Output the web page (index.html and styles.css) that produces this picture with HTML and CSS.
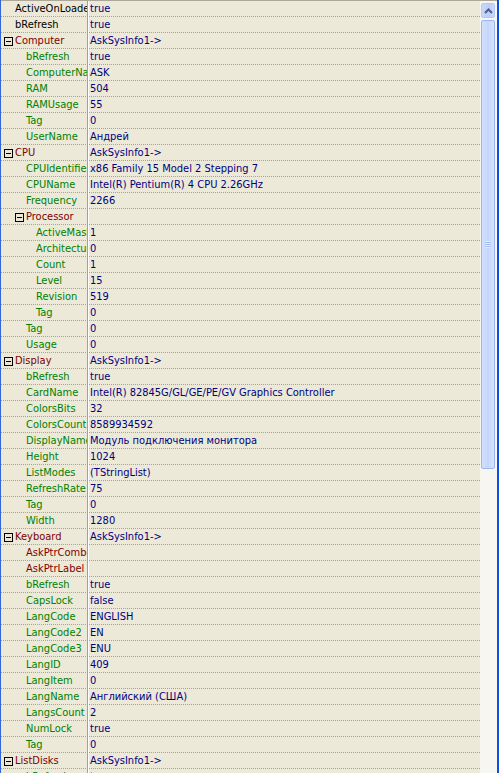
FILE: index.html
```html
<!DOCTYPE html>
<html>
<head>
<meta charset="utf-8">
<link rel="stylesheet" href="styles.css">
</head>
<body>
<div class="frame">
  <div class="grid">
    <div class="row"><div class="name l0">ActiveOnLoaded</div><div class="val">true</div></div>
    <div class="row"><div class="name l0">bRefresh</div><div class="val">true</div></div>
    <div class="row"><div class="name l0 exp cat"><span class="box"></span>Computer</div><div class="val">AskSysInfo1-&gt;</div></div>
    <div class="row"><div class="name l1 sub">bRefresh</div><div class="val">true</div></div>
    <div class="row"><div class="name l1 sub">ComputerName</div><div class="val">ASK</div></div>
    <div class="row"><div class="name l1 sub">RAM</div><div class="val">504</div></div>
    <div class="row"><div class="name l1 sub">RAMUsage</div><div class="val">55</div></div>
    <div class="row"><div class="name l1 sub">Tag</div><div class="val">0</div></div>
    <div class="row"><div class="name l1 sub">UserName</div><div class="val">Андрей</div></div>
    <div class="row"><div class="name l0 exp cat"><span class="box"></span>CPU</div><div class="val">AskSysInfo1-&gt;</div></div>
    <div class="row"><div class="name l1 sub">CPUIdentifier</div><div class="val">x86 Family 15 Model 2 Stepping 7</div></div>
    <div class="row"><div class="name l1 sub">CPUName</div><div class="val">Intel(R) Pentium(R) 4 CPU 2.26GHz</div></div>
    <div class="row"><div class="name l1 sub">Frequency</div><div class="val">2266</div></div>
    <div class="row"><div class="name l1 exp cat"><span class="box"></span>Processor</div><div class="val"></div></div>
    <div class="row"><div class="name l2 sub">ActiveMask</div><div class="val">1</div></div>
    <div class="row"><div class="name l2 sub">Architecture</div><div class="val">0</div></div>
    <div class="row"><div class="name l2 sub">Count</div><div class="val">1</div></div>
    <div class="row"><div class="name l2 sub">Level</div><div class="val">15</div></div>
    <div class="row"><div class="name l2 sub">Revision</div><div class="val">519</div></div>
    <div class="row"><div class="name l2 sub">Tag</div><div class="val">0</div></div>
    <div class="row"><div class="name l1 sub">Tag</div><div class="val">0</div></div>
    <div class="row"><div class="name l1 sub">Usage</div><div class="val">0</div></div>
    <div class="row"><div class="name l0 exp cat"><span class="box"></span>Display</div><div class="val">AskSysInfo1-&gt;</div></div>
    <div class="row"><div class="name l1 sub">bRefresh</div><div class="val">true</div></div>
    <div class="row"><div class="name l1 sub">CardName</div><div class="val">Intel(R) 82845G/GL/GE/PE/GV Graphics Controller</div></div>
    <div class="row"><div class="name l1 sub">ColorsBits</div><div class="val">32</div></div>
    <div class="row"><div class="name l1 sub">ColorsCount</div><div class="val">8589934592</div></div>
    <div class="row"><div class="name l1 sub">DisplayName</div><div class="val">Модуль подключения монитора</div></div>
    <div class="row"><div class="name l1 sub">Height</div><div class="val">1024</div></div>
    <div class="row"><div class="name l1 sub">ListModes</div><div class="val">(TStringList)</div></div>
    <div class="row"><div class="name l1 sub">RefreshRate</div><div class="val">75</div></div>
    <div class="row"><div class="name l1 sub">Tag</div><div class="val">0</div></div>
    <div class="row"><div class="name l1 sub">Width</div><div class="val">1280</div></div>
    <div class="row"><div class="name l0 exp cat"><span class="box"></span>Keyboard</div><div class="val">AskSysInfo1-&gt;</div></div>
    <div class="row"><div class="name l1 cat">AskPtrCombo</div><div class="val"></div></div>
    <div class="row"><div class="name l1 cat">AskPtrLabel</div><div class="val"></div></div>
    <div class="row"><div class="name l1 sub">bRefresh</div><div class="val">true</div></div>
    <div class="row"><div class="name l1 sub">CapsLock</div><div class="val">false</div></div>
    <div class="row"><div class="name l1 sub">LangCode</div><div class="val">ENGLISH</div></div>
    <div class="row"><div class="name l1 sub">LangCode2</div><div class="val">EN</div></div>
    <div class="row"><div class="name l1 sub">LangCode3</div><div class="val">ENU</div></div>
    <div class="row"><div class="name l1 sub">LangID</div><div class="val">409</div></div>
    <div class="row"><div class="name l1 sub">LangItem</div><div class="val">0</div></div>
    <div class="row"><div class="name l1 sub">LangName</div><div class="val">Английский (США)</div></div>
    <div class="row"><div class="name l1 sub">LangsCount</div><div class="val">2</div></div>
    <div class="row"><div class="name l1 sub">NumLock</div><div class="val">true</div></div>
    <div class="row"><div class="name l1 sub">Tag</div><div class="val">0</div></div>
    <div class="row"><div class="name l0 exp cat"><span class="box"></span>ListDisks</div><div class="val">AskSysInfo1-&gt;</div></div>
    <div class="row"><div class="name l1 sub">bRefresh</div><div class="val">true</div></div>
  </div>
  <div class="scroll">
    <div class="btn">
      <svg width="9" height="6" viewBox="0 0 9 6"><polyline points="1,5 4.5,1.5 8,5" fill="none" stroke="#4D6185" stroke-width="2"/></svg>
    </div>
    <div class="thumb"><div class="grip"></div></div>
    <div class="track"></div>
  </div>
</div>
</body>
</html>
```
FILE: styles.css
```css
html, body {
  margin: 0;
  padding: 0;
  background: #ECE9D8;
}
body {
  font-family: "DejaVu Sans Condensed", "DejaVu Sans", sans-serif;
  font-size: 11px;
}
.frame {
  display: flex;
  height: 773px;
  overflow: hidden;
  border-left: 1px solid #3165D8;
  border-right: 2px solid #0B50E0;
}
.grid {
  flex: 1;
  border-top: 1px solid #ACA899;
  min-width: 0;
}
.row {
  display: flex;
  height: 16px;
  line-height: 15px;
  background: linear-gradient(to right, #A6A399 50%, transparent 50%) left bottom / 2px 1px repeat-x;
}
.name {
  width: 87px;
  flex: none;
  box-sizing: border-box;
  border-right: 1px solid #A0A0A0;
  overflow: hidden;
  white-space: nowrap;
  display: flex;
  align-items: flex-start;
  color: #000;
  height: 16px;
}
.l0 { padding-left: 14px; }
.l0.exp { padding-left: 3px; }
.l1 { padding-left: 25px; }
.l1.exp { padding-left: 14px; }
.l2 { padding-left: 35px; }
.cat { color: #800000; }
.sub { color: #008000; }
.box {
  flex: none;
  width: 9px;
  height: 9px;
  box-sizing: border-box;
  border: 1px solid #000;
  margin: 4px 2px 0 0;
  position: relative;
}
.box::after {
  content: "";
  position: absolute;
  left: 1px;
  top: 3px;
  width: 5px;
  height: 1px;
  background: #000;
}
.val {
  flex: 1;
  min-width: 0;
  border-left: 1px solid #FFFFFF;
  padding-left: 1px;
  color: #000080;
  white-space: nowrap;
  overflow: hidden;
}
.scroll {
  width: 17px;
  flex: none;
  display: flex;
  flex-direction: column;
  background: #F7F6F1;
  box-sizing: border-box;
  padding: 2px 2px 0 1px;
  border-top: 1px solid #ACA899;
}
.btn {
  height: 15px;
  flex: none;
  box-sizing: border-box;
  border: 1px solid #B5C9F3;
  border-radius: 2px;
  background: linear-gradient(to right, #C9D9FB, #BBCEF8 60%, #CCDBFC);
  display: flex;
  align-items: center;
  justify-content: center;
}
.thumb {
  margin-top: 2px;
  height: 449px;
  flex: none;
  box-sizing: border-box;
  border: 1px solid #9DB5EC;
  border-radius: 2px;
  background: linear-gradient(to right, #D3E0FD, #C5D6FC 50%, #D8E4FE);
  display: flex;
  align-items: center;
  justify-content: center;
}
.grip {
  width: 6px;
  height: 7px;
  background: repeating-linear-gradient(to bottom, #EEF4FE 0 1px, #8CB0F8 1px 2px);
  opacity: 0.6;
}
.track {
  flex: 1;
}
```
